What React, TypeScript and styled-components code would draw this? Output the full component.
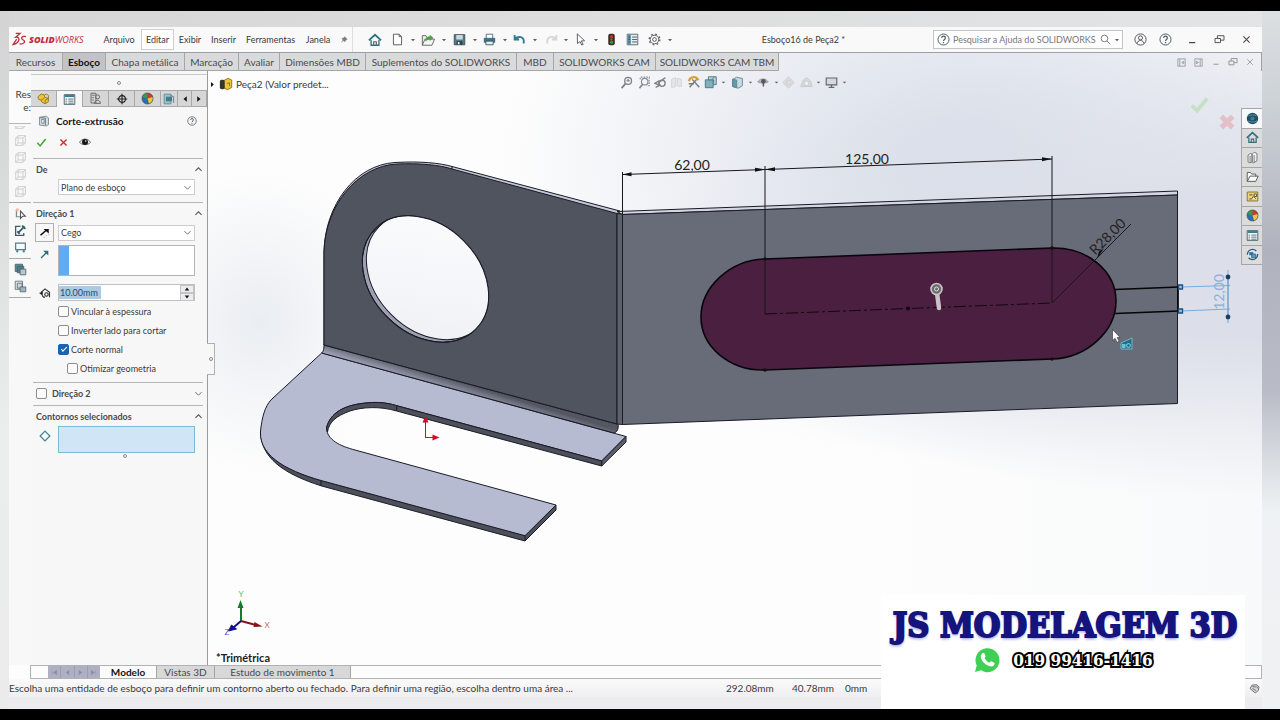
import React from "react";
import styled, { createGlobalStyle } from "styled-components";

const GlobalStyle = createGlobalStyle`
  *, *::before, *::after { box-sizing: border-box; }
  body { margin: 0; background: #000; }
  button, input, select { font: inherit; color: inherit; margin: 0; }
  button { padding: 0; border: 0; background: none; }
`;

const line = "#a9a9ab";
const ui = `Lato, "Open Sans", sans-serif`;

const Page = styled.div`
  min-height: 100vh;
  display: flex;
  flex-direction: column;
  padding: 11px 0;
  background: #000;
  font: 10px/14px ${ui};
  color: #3a3a3c;
`;

const Desk = styled.div`
  position: relative;
  flex: 1;
  display: flex;
  padding: 16px 18px 12px 9px;
  background:
    linear-gradient(180deg, #dcdfe2 0, #cdd2d7 90px, #b0b2bd 240px, #b9bcc6 380px, #eff2f4 500px, #f0f1f3 100%) right / 18px 100% no-repeat,
    linear-gradient(180deg, #d4d4d4 0, #d8d9d9 150px, #eceded 420px, #ebebec 100%) left / 9px 100% no-repeat,
    linear-gradient(180deg, transparent 80%, #ededef 100%),
    linear-gradient(90deg, #d6d6d6 0, #dedede 50%, #e2e4e6 100%);
`;

const Window = styled.div`
  flex: 1;
  min-width: 0;
  display: flex;
  flex-direction: column;
  background:
    radial-gradient(ellipse 130px 150px at 20% 44%, rgba(226, 231, 237, 0.7), rgba(240, 243, 246, 0)),
    radial-gradient(ellipse 620px 230px at 100% 36%, #dcdfe9 30%, rgba(236, 239, 245, 0) 100%),
    radial-gradient(ellipse 460px 300px at 76% 20%, #dbe0ea 10%, rgba(236, 239, 245, 0) 100%),
    linear-gradient(90deg, #fdfdfd 70%, #f8f9fa 100%);
`;

/* ---------- title bar ---------- */

const TitleBar = styled.header`
  display: flex;
  align-items: center;
  height: 26px;
  flex: none;
  padding-right: 2px;
  font-size: 9px;
  background: #f9f9f9;
  border-bottom: 1px solid #a0a0a2;
`;

const Brand = styled.div`
  display: flex;
  align-items: center;
  gap: 2px;
  width: 88px;
  padding-left: 3px;
  color: #c4293c;
  font: italic 9px/12px "Open Sans", sans-serif;
  b { font-weight: 800; }
`;

const MenuButton = styled.button<{ $w: number; $on?: boolean }>`
  width: ${(p) => p.$w}px;
  height: 21px;
  border: 1px solid ${(p) => (p.$on ? "#cfcfcf" : "transparent")};
  background: ${(p) => (p.$on ? "#fff" : "transparent")};
  white-space: nowrap;
`;

const IconButton = styled.button<{ $w?: number; $h?: number }>`
  display: flex;
  align-items: center;
  justify-content: center;
  flex: none;
  width: ${(p) => p.$w ?? 22}px;
  height: ${(p) => p.$h ?? 20}px;
`;

const Pin = styled(IconButton)`
  border-right: 1px solid #dedede;
  height: 25px;
`;

const QuickTools = styled.div`
  display: flex;
  padding-left: 11px;
`;

const DocTitle = styled.h1`
  flex: 1;
  margin: 0;
  font: inherit;
  text-align: center;
  white-space: nowrap;
`;

const Search = styled.label`
  display: flex;
  align-items: center;
  gap: 3px;
  width: 190px;
  height: 19px;
  padding: 0 2px 0 3px;
  margin-right: 5px;
  background: #fff;
  border: 1px solid #c4c4c4;
  svg { flex: none; }
  input {
    flex: 1;
    min-width: 0;
    border: 0;
    padding: 0;
    background: none;
    outline: 0;
  }
  input::placeholder { color: #77777a; opacity: 1; }
`;

/* ---------- command tabs ---------- */

const CommandTabs = styled.nav`
  display: flex;
  height: 18px;
  flex: none;
  border-right: 1px solid #a0a0a2;
`;

const CommandTab = styled.button<{ $w: number; $on?: boolean }>`
  width: ${(p) => p.$w}px;
  flex: none;
  border: solid #a6a6a8;
  border-width: 0 1px 1px 0;
  background: ${(p) => (p.$on ? "#c3c3c5" : "#d9dadb")};
  color: ${(p) => (p.$on ? "#111" : "#4a4a4c")};
  font-weight: ${(p) => (p.$on ? 700 : 400)};
  white-space: nowrap;
`;

const DocControls = styled.div`
  display: flex;
  align-items: center;
  margin-left: auto;
  padding-right: 3px;
`;

/* ---------- work area ---------- */

const Work = styled.div`
  flex: 1;
  display: flex;
  min-height: 0;
`;

const SideStrip = styled.aside`
  width: 22px;
  flex: none;
  display: flex;
  flex-direction: column;
  background: #f8f8f8;
`;

const Clipped = styled.div`
  height: 53px;
  padding-top: 17px;
  overflow: hidden;
  text-align: right;
  line-height: 13px;
  background: #fbfbfb;
  border-bottom: 1px solid #b8b8b8;
`;

const StripGroup = styled.div`
  display: flex;
  flex-direction: column;
  align-items: center;
  padding: 2px 0 2px;
  border-bottom: 1px solid ${line};
`;

const HalfHidden = styled.div`
  display: flex;
  align-items: flex-end;
  height: 6px;
  overflow: hidden;
`;

const Panel = styled.section`
  width: 177px;
  flex: none;
  display: flex;
  flex-direction: column;
  background: #f7f7f8;
  border-right: 1px solid #9c9c9e;
`;

const Grip = styled.div`
  display: flex;
  align-items: center;
  justify-content: center;
  height: 16px;
  margin-top: 3px;
  border-top: 1px solid #c9c9cb;
`;

const Dot = styled.i`
  width: 4px;
  height: 4px;
  border: 1px solid #8a8a8c;
  border-radius: 50%;
`;

const PanelTabs = styled.div`
  display: flex;
  height: 17px;
  border-top: 1px solid ${line};
`;

const PanelTab = styled.button<{ $on?: boolean; $w?: number }>`
  width: ${(p) => p.$w ?? 26}px;
  display: flex;
  align-items: center;
  justify-content: center;
  background: ${(p) => (p.$on ? "#f7f7f8" : "#d6d6d7")};
  border: solid ${line};
  border-width: 0 1px ${(p) => (p.$on ? 0 : 1)}px 0;
`;

const PanelHead = styled.div`
  display: flex;
  align-items: center;
  height: 27px;
  padding: 0 10px 0 7px;
  gap: 6px;
  h2 { flex: 1; margin: 0; font: 700 10px/14px ${ui}; color: #151515; }
`;

const PanelActions = styled.div`
  display: flex;
  height: 24px;
`;

const Group = styled.section<{ $pb?: number }>`
  margin: 0 4px 0 2px;
  padding-bottom: ${(p) => p.$pb ?? 0}px;
  border-top: 1px solid #b5b5b7;
`;

const GroupHead = styled.header`
  display: flex;
  align-items: center;
  height: 20px;
  padding: 0 0 0 3px;
  h3, label { flex: 1; margin: 0; font: 700 9px/13px ${ui}; color: #4a4a4c; }
  input { margin-right: 5px; }
`;

const Row = styled.div<{ $h: number; $top?: boolean }>`
  display: flex;
  align-items: ${(p) => (p.$top ? "flex-start" : "center")};
  height: ${(p) => p.$h}px;
`;

const Lead = styled.span<{ $boxed?: boolean }>`
  width: 19px;
  height: 19px;
  margin: 0 3px 0 2px;
  display: flex;
  align-items: center;
  justify-content: center;
  flex: none;
  border: 1px solid ${(p) => (p.$boxed ? "#b0b0b2" : "transparent")};
`;

const Picker = styled.span`
  display: grid;
  width: 137px;
  height: 16px;
  align-items: center;
  margin-left: 1px;
  > * { grid-area: 1 / 1; }
  select {
    appearance: none;
    width: 100%;
    height: 16px;
    padding: 0 2px;
    border: 1px solid #cdcdcf;
    border-radius: 0;
    background: #fff;
    font-size: 9px;
    line-height: 13px;
  }
  svg { justify-self: end; margin-right: 3px; pointer-events: none; }
`;

const ListRow = styled(Row)`
  padding-top: 3px;
`;

const ListBox = styled.div<{ $active?: boolean; $h: number }>`
  width: 137px;
  height: ${(p) => p.$h}px;
  margin-left: 1px;
  border: 1px solid ${(p) => (p.$active ? "#7dbbd2" : "#b4b4b6")};
  background: ${(p) => (p.$active ? "#d0e5f6" : "linear-gradient(90deg, #5facf4 10px, #fff 10px)")};
`;

const Spin = styled.div`
  display: flex;
  width: 137px;
  height: 17px;
  margin-left: 1px;
  border: 1px solid #c0c0c2;
  background: #fff;
  input {
    flex: 1;
    min-width: 0;
    border: 0;
    padding: 0 1px;
    outline: 0;
    color: #2d4a66;
    font-size: 9px;
    background: linear-gradient(#a9cbe6, #a9cbe6) left center / 42px 13px no-repeat;
  }
`;

const Arrows = styled.div`
  width: 14px;
  display: flex;
  flex-direction: column;
  button { flex: 1; display: flex; align-items: center; justify-content: center; background: #ececee; border: 1px solid #c4c4c6; }
`;

const Tick = styled.input.attrs({ type: "checkbox" })`
  appearance: none;
  position: relative;
  width: 11px;
  height: 11px;
  flex: none;
  border: 1px solid #8d8d90;
  border-radius: 2px;
  background: #fbfbfb;
  &:checked { background: #1b62b0; border-color: #1b62b0; }
  &:checked::after {
    content: "";
    position: absolute;
    left: 2px;
    top: 2px;
    width: 6px;
    height: 3px;
    border: solid #fff;
    border-width: 0 0 1px 1px;
    transform: rotate(-45deg);
  }
`;

const TickRow = styled.label<{ $in?: boolean }>`
  display: flex;
  align-items: center;
  gap: 2px;
  height: 19px;
  padding-left: ${(p) => (p.$in ? 34 : 25)}px;
  font-size: 9px;
  white-space: nowrap;
`;

const Center = styled.div`
  display: flex;
  justify-content: center;
  padding: 1px 0 0 14px;
`;

/* ---------- viewport ---------- */

const Viewport = styled.main`
  flex: 1;
  min-width: 0;
  display: grid;
  grid-template: minmax(0, 1fr) / minmax(0, 1fr);
  > * { grid-area: 1 / 1; }
`;

const Scene = styled.svg`
  width: 100%;
  height: 100%;
  display: block;
`;

const Overlay = styled.div`
  display: flex;
  flex-direction: column;
`;

const HeadsUp = styled.div`
  display: grid;
  grid-template-columns: 1fr auto 1fr;
  align-items: center;
  height: 22px;
  padding-right: 5px;
`;

const TreeRoot = styled.div`
  display: flex;
  align-items: center;
  gap: 3px;
  padding: 4px 0 0 1px;
  white-space: nowrap;
`;

const ViewTools = styled.div`
  display: flex;
`;

const Corner = styled.div`
  display: flex;
  justify-content: flex-end;
  align-items: flex-start;
  padding-top: 15px;
`;

const Confirm = styled.div`
  display: flex;
  padding-right: 4px;
  margin-top: -14px;
  button:last-child { margin-top: 18px; }
`;

const TaskPane = styled.div`
  width: 21px;
  height: 157px;
  display: flex;
  flex-direction: column;
  border: solid #a5a5a7;
  border-width: 1px 0 0 1px;
`;

const TaskButton = styled.button<{ $on?: boolean }>`
  flex: 1;
  display: flex;
  align-items: center;
  justify-content: center;
  background: ${(p) => (p.$on ? "#f8f8f8" : "#dcdcdd")};
  border-bottom: 1px solid #a5a5a7;
`;

const Flap = styled.div`
  align-self: flex-start;
  display: flex;
  align-items: center;
  justify-content: center;
  width: 8px;
  height: 32px;
  margin: 78px 0 0 -1px;
  background: #f7f7f8;
  border: 1px solid #b0b0b2;
  border-left: 0;
`;

/* ---------- bottom ---------- */

const ModelTabs = styled.nav`
  display: flex;
  height: 14px;
  flex: none;
  margin-left: 21px;
  padding-left: 17px;
  border: 1px solid #b2b2b4;
  background: #fcfcfc;
`;

const Player = styled.div`
  display: flex;
  width: 52px;
  gap: 1px;
  background: #9c9cb4;
  button { flex: 1; background: #b0b0c4; display: flex; align-items: center; justify-content: center; }
`;

const ModelTab = styled.button<{ $w: number; $on?: boolean }>`
  width: ${(p) => p.$w}px;
  line-height: 12px;
  background: ${(p) => (p.$on ? "#fcfcfc" : "#d8d8d9")};
  font-weight: ${(p) => (p.$on ? 700 : 400)};
  color: ${(p) => (p.$on ? "#111" : "#4a4a4c")};
  border-right: 1px solid #a6a6a8;
`;

const Status = styled.footer`
  display: flex;
  align-items: center;
  height: 18px;
  flex: none;
  white-space: nowrap;
  background: linear-gradient(#fafafa, #efeff1);
  p { margin: 0 auto 0 0; }
`;

const Readout = styled.span<{ $w: number }>`
  width: ${(p) => p.$w}px;
`;

const Banner = styled.div`
  position: absolute;
  right: 35px;
  bottom: 0;
  width: 364px;
  height: 114px;
  background: #fff;
  display: flex;
  flex-direction: column;
  align-items: center;
  white-space: nowrap;
  strong {
    margin: 9px 0 0 4px;
    font: 700 34px/42px "DejaVu Serif Condensed", "DejaVu Serif", serif;
    color: #14147c;
    -webkit-text-stroke: 2px #14147c;
    text-shadow: 0 2px 3px #8b8bea;
  }
`;

const Phone = styled.div`
  display: flex;
  align-items: center;
  gap: 12px;
  height: 28px;
  span {
    font: 700 17px/22px "DejaVu Serif Condensed", "DejaVu Serif", serif;
    color: #fff;
    -webkit-text-stroke: 4px #000;
    paint-order: stroke fill;
  }
`;

/* ---------- icons ---------- */

const teal = "#2c6e80";
const grey = "#5d5f63";

const art: Record<string, React.ReactNode> = {
  pin: <path d="M9 2l5 5-2 .5-2 3-1 .5L7 9l-4 4 3-5-2-2 1-1 3-1z" fill="#7d7f82" />,
  home: <g fill="none" stroke={teal} strokeWidth="2"><path d="M1 8.500L8 2l7 6.500" /><path d="M3.500 8v6h9V8" strokeWidth="1.500" /><path d="M6.500 14v-4h3v4" strokeWidth="1.300" stroke={grey} /></g>,
  doc: <path d="M3 1.500h7l3 3v10H3zM10 1.500v3h3" fill="#fff" stroke={grey} strokeWidth="1.200" />,
  open: <g stroke={grey}><path d="M1.500 14V3h4l1 2h6v3" fill="#eee" /><path d="M1.500 14l3-7h11l-3 7z" fill="#f4f4f4" /><path d="M5 10c0-5 2-6 5-6V2l4 3.500L10 9V7C8 7 7 8 5 10z" fill="#4ba23e" stroke="none" /></g>,
  save: <g><path d="M1.500 2h13v12.500h-13z" fill="#4d7d8d" stroke="#37474f" /><path d="M4 2.500h8V8H4z" fill="#cfd9dd" /><path d="M4.500 10h7v4.500h-7z" fill="#28424e" /><path d="M6 11h2v3H6z" fill="#fff" /></g>,
  print: <g><path d="M4 1.500h8V7H4z" fill="#fff" stroke="#3e5c6b" /><path d="M1 6h14v6H1z" fill="#3f7388" /><path d="M3.500 10h9v4.500h-9z" fill="#e6eef1" stroke="#2d4a58" /></g>,
  undo: <path d="M2 2.500v5.500h5.500M2 7.500C6 3.500 15 3.500 13 13" fill="none" stroke="#337a94" strokeWidth="2.300" />,
  redo: <path d="M14 2.500v5.500H8.500M14 7.500C10 3.500 1 3.500 3 13" fill="none" stroke="#d6d6d8" strokeWidth="2.200" />,
  cursor: <path d="M4 1l9 8.500-4 .3 2.200 4.200-1.700.8-2-4.300L4.300 13z" fill="#fff" stroke={grey} strokeWidth="1.200" />,
  light: <g><rect x="4" y="1" width="8" height="14" rx="2.500" fill="#3a2b22" /><circle cx="8" cy="4.500" r="2" fill="#c5312b" /><circle cx="8" cy="8" r="1.500" fill="#7d6a34" /><circle cx="8" cy="11.500" r="2" fill="#3f9a41" /></g>,
  list: <g><path d="M1.500 1.500h13v13h-13z" fill="#e7edf0" stroke="#43565f" /><path d="M2 2h4v12.500H2z" fill="#5b93ab" /><path d="M7.500 5h6M7.500 8h6M7.500 11h6M3 5h2M3 8h2M3 11h2" stroke="#36474f" /></g>,
  gear: <g fill="none" stroke={grey} strokeWidth="1.200"><circle cx="8" cy="8" r="5.300" /><circle cx="8" cy="8" r="2.300" /><circle cx="8" cy="8" r="6.600" strokeDasharray="2.200 3" strokeWidth="1.600" /></g>,
  caret: <path d="M2.500 5.500h11L8 11.500z" fill={grey} />,
  help: <g fill="none" stroke="#4f5a60" strokeWidth="1.200"><circle cx="8" cy="8" r="6.800" /><path d="M5.800 6.200c0-3 4.500-3 4.500 0C10.300 8 8 8 8 9.800M8 11.200v1.400" strokeWidth="1.500" /></g>,
  user: <g fill="none" stroke="#55575a" strokeWidth="1.200"><circle cx="8" cy="8" r="6.900" /><circle cx="8" cy="6" r="2.500" /><path d="M3.800 13c.3-5 8.100-5 8.400 0" /></g>,
  magnify: <g fill="none" stroke="#6e7072" strokeWidth="1.300"><circle cx="6.500" cy="6.500" r="4.800" /><path d="M10 10l5 5" /></g>,
  min: <path d="M3 12.500h9" stroke="#444" strokeWidth="1.800" />,
  restore: <path d="M1.500 6.500h8v6h-8zM5 6V2.500h9.500V9H10" fill="none" stroke="#444" strokeWidth="1.300" />,
  close: <path d="M3.500 3.500l9 9M12.500 3.500l-9 9" stroke="#444" strokeWidth="1.500" />,
  minor: <path d="M3 12.500h10" stroke="#8b9096" strokeWidth="1.800" />,
  restoreor: <path d="M1.500 6.500h8v6h-8zM5 6V2.500h9.500V9H10" fill="none" stroke="#8b9096" strokeWidth="1.500" />,
  closeor: <path d="M2.500 2.500l11 11M13.500 2.500l-11 11" stroke="#8b9096" strokeWidth="1.600" />,
  dockl: <path d="M1.500 1.500h13v13h-13zM5 2v12M12 6L8.500 8l3.500 2z" fill="none" stroke="#858a90" strokeWidth="1.300" />,
  dockr: <path d="M1.500 1.500h13v13h-13zM11 2v12M4 6l4 2-4 2z" fill="none" stroke="#858a90" strokeWidth="1.300" />,
  cube: <path d="M2 5h9v9H2zM5 2h9v9M5 2L2 5M14 2l-3 3M14 11l-3 3M5 2v9h9M5 11l-3 3" fill="none" stroke="#c9cbcd" strokeWidth="1.100" />,
  sketch: <g fill="none"><path d="M3 3v9h5" stroke="#7c8a90" strokeWidth="1.500" /><circle cx="4" cy="3.500" r="2" fill="#f3b6a3" /><path d="M8 5v9l2.500-2.500H14z" stroke="#555" strokeWidth="1.300" fill="#fff" /></g>,
  edit: <g fill="none" stroke="#35606c" strokeWidth="1.600"><path d="M8 3H2v11h10v-3" /><path d="M5 11L13 3M10 2l4 4M4 9l3 3" strokeWidth="2.200" /></g>,
  flow: <g fill="none" stroke="#4f8390" strokeWidth="1.500"><path d="M2 2.500h12v8H2z" /><path d="M4 10v4M12 10v4M2.500 12.500h3M10.500 12.500h3" /></g>,
  stack: <g stroke="#48606a"><path d="M1.500 1.500h9v9h-9z" fill="#5d8e9a" /><path d="M4 4h8v8H4z" fill="#4d7c88" /><path d="M7.500 7.500h7v7h-7z" fill="#b9c7cc" /></g>,
  stack2: <g stroke="#57686f"><path d="M1.500 1.500h9v10h-9z" fill="#e8eced" /><path d="M4 4h6v6H4z" fill="#cfd8da" /><path d="M7.500 8.500h7v6h-7z" fill="#9fb4ba" /></g>,
  part: <g fill="#ecc53a" stroke="#8d6a12"><path d="M1 6l4-3.500 4 1 .5 3L14 8v4l-4 2.500-4-2L5 10 2 9z" /><path d="M9.500 3.500l2.500-1 2 2V8M5 10l4-2.500M10 14v-4l4-2" fill="none" /></g>,
  part2: <g><path d="M5.500 4l5-2.500 4 2V12l-5 2.500-4-2z" fill="#ecc53a" stroke="#8d6a12" /><rect x="1" y="3" width="5.500" height="11" rx="2" fill="#3a352a" /><path d="M9 7.500l3-1v4" stroke="#8d6a12" fill="none" /></g>,
  config: <g fill="none" stroke="#66686c" strokeWidth="1.200"><path d="M2.500 1.500h6v12h-6zM4 4h3M4 7h2" /><circle cx="10.500" cy="6" r="2.500" /><path d="M7 14c0-5 7-5 7 0zM4 10h2" /></g>,
  target: <g fill="none" stroke="#222" strokeWidth="1.500"><circle cx="8" cy="8" r="4.500" /><path d="M8 1v14M1 8h14" /></g>,
  ball: <g><circle cx="8" cy="8" r="6.800" fill="#2b6db5" /><path d="M8 8L1.500 6A6.800 6.800 0 0 1 8 1.200z" fill="#3f9a41" /><path d="M8 8V1.200A6.800 6.800 0 0 1 14.500 6z" fill="#d33a2c" /><path d="M8 8l6.500-2A6.800 6.800 0 0 1 10 14.500z" fill="#f0c63a" /><circle cx="8" cy="8" r="6.800" fill="none" stroke="#4d4d4d" strokeWidth=".8" /></g>,
  cam: <g><path d="M1.500 1.500h9v13h-9z" fill="#9cc1c8" stroke="#4f8390" /><path d="M4 5h8v6H4z" fill="#3f7e8e" /><path d="M10 3l4 2v8" stroke="#77888c" fill="none" strokeWidth="1.500" /></g>,
  left: <path d="M11.500 2.500v11L5 8z" fill="#111" />,
  right: <path d="M4.500 2.500v11L11 8z" fill="#111" />,
  extrude: <g stroke="#6c7a80"><path d="M2 3l9-1.500L14 4v9l-3 1.500-9-1z" fill="#d3dadd" /><path d="M2 3l8 1v10" fill="#aebbc0" /><path d="M5 6h3v5H5z" fill="#fff" /></g>,
  ok: <path d="M2 8.500l4 4.500 8-10" fill="none" stroke="#3fa535" strokeWidth="2.200" />,
  no: <path d="M2.500 2.500l11 11M13.500 2.500l-11 11" stroke="#c93030" strokeWidth="2.500" />,
  eye: <g><path d="M.5 8.500C4 2.500 12 2.500 15.500 8.500 12 12.500 4 12.500.5 8.500z" fill="#e8e8e8" stroke="#555" /><circle cx="8" cy="8" r="4" fill="#16181c" /><circle cx="9" cy="6.500" r="1" fill="#fff" /></g>,
  up: <path d="M2.500 10.500L8 5l5.500 5.500" fill="none" stroke="#555" strokeWidth="1.800" />,
  down: <path d="M2.500 5.500L8 11l5.500-5.500" fill="none" stroke="#666" strokeWidth="1.600" />,
  flip: <g><path d="M2 11L10 4" stroke="#111" strokeWidth="2.200" /><path d="M6 2.500h7v6z" fill="#111" /><path d="M6 14l8-5" stroke="#c8c8ca" strokeWidth="1.600" strokeDasharray="2 1.500" /></g>,
  dir: <g><path d="M3 13L11 5" stroke={teal} strokeWidth="2" /><path d="M6 2.500h7.500v7z" fill={teal} /></g>,
  depth: <g fill="none" stroke="#333" strokeWidth="1.500"><path d="M3 7l5-4.500 6 4.500v6.500" /><path d="M0 8l5-2v5.500z" fill="#222" stroke="none" /><path d="M4 11l2 2.500h2" /><circle cx="10" cy="10" r="2.300" /></g>,
  diamond: <path d="M8 1.500L14.500 8 8 14.500 1.500 8z" fill="none" stroke="#3f8290" strokeWidth="1.600" />,
  triup: <path d="M2 12h12L8 4z" fill="#111" />,
  tridown: <path d="M2 4h12l-6 8z" fill="#111" />,
  zoomfit: <g fill="none" stroke="#808285" strokeWidth="1.600"><circle cx="10" cy="6" r="4.200" /><path d="M7 9l-5 6" strokeWidth="2.200" /><path d="M10 3.500v3M8 6h4" /></g>,
  zoomarea: <g fill="none" stroke="#8b8d96" strokeWidth="1.500"><circle cx="9.500" cy="7" r="4" /><path d="M7 10l-4 5" strokeWidth="2.200" /><path d="M4 4V1.500h11V12h-3" strokeDasharray="2 1.300" /></g>,
  prev: <g fill="none" stroke="#808285" strokeWidth="1.700"><circle cx="10" cy="9" r="3.700" /><path d="M14 2L7 7M8 11l-6 3M1 9l5-3v5z" /></g>,
  section: <g fill="#e4e6e7" stroke="#cdcfd1"><path d="M2 4l5-2v11l-5 1zM9 3l5 1v9l-5-1z" /></g>,
  annot: <g fill="none"><path d="M2 7c2-6 9-6 11-1" stroke="#d7a13e" strokeWidth="2.500" /><path d="M3 14l8-9M6 5l8 9M2 10h6" stroke="#7b7d80" strokeWidth="1.700" /></g>,
  orient: <g stroke="#49717f"><path d="M1.500 5.500h9v9h-9z" fill="#7fb0c0" /><path d="M5 2h9v9h-3V5.500H5z" fill="#b9d2da" /><path d="M9 5l3-3" /></g>,
  display: <g stroke="#5b7f8b"><path d="M2 4l5-2.500L14 3v9l-5 3-7-2z" fill="#c3dbe2" /><path d="M2 4l5 1v9.500l-5-1.500z" fill="#5f9aad" /></g>,
  hide: <g><path d="M1 8C4 2.500 12 2.500 15 8c-3 2-11 2-14 0z" fill="#b5b7ba" stroke="#8a8c90" /><circle cx="8.500" cy="7" r="3" fill="#55585d" /><path d="M8.500 7v7" stroke="#55585d" strokeWidth="2" /></g>,
  appear: <g fill="#dcdde0" stroke="#cbccd0"><path d="M8 1l7 7-7 7-7-7z" /><circle cx="8" cy="8" r="3" /></g>,
  scene: <g fill="#d8d9dd" stroke="#c6c8cc"><path d="M1 13l3-8 4-3 5 4 2 7z" /><circle cx="8" cy="9" r="3" fill="#eee" /></g>,
  monitor: <g fill="none" stroke="#62656b" strokeWidth="1.400"><path d="M1.500 2.500h13v8.500h-13z" fill="#d5d9df" /><path d="M8 11v3M4.500 14h7" /></g>,
  bigok: <path d="M1.500 9l4.500 4L14.500 3" fill="none" stroke="#c6e0c2" strokeWidth="3.200" />,
  bigno: <path d="M3 3l10 10M13 3L3 13" stroke="#e3bfca" strokeWidth="4.500" />,
  globe: <g><circle cx="8" cy="8" r="7" fill="#1f4e63" /><path d="M3 5c3-2 7-2 10 0M2.500 11c4 2 7 2 11 0" stroke="#6ba3b8" fill="none" /><circle cx="8" cy="8" r="2.500" fill="#3a7f99" /></g>,
  lib: <g fill="#f1f1f1" stroke="#64666a"><path d="M2.500 5l3-2 2 1v9.500l-3 1-2-1zM7.500 4l2.500-2.500 3.500 1.500V12l-4 2.500-2-1zM5 6v8M10 5v9" /></g>,
  folder: <path d="M1.500 14V3h4l1.500 2h5v3M1.500 14L5 7.500h10L12 14z" fill="#fafafa" stroke="#595b5f" strokeWidth="1.200" />,
  palette: <g><path d="M1.500 2.500h13v11h-13z" fill="#efd36c" stroke="#6f6331" /><path d="M4 6h4M10 5h3v3h-3zM4 11h3l2-3 3 3" stroke="#5a512c" fill="#fff" strokeWidth="1.200" /></g>,
  props: <g><path d="M1.500 2h13v12h-13z" fill="#f7f9fa" stroke="#37505a" /><path d="M2 2.500h12V5H2z" fill="#3b7c90" /><path d="M3 7.500h2M3 10h2M3 12.500h2M6.500 7.500h6.500M6.500 10h6.500M6.500 12.500h6.500" stroke="#37606c" /></g>,
  forum: <g><circle cx="8" cy="8" r="6.300" fill="#dbe8ef" stroke="#2d5d7b" strokeWidth="1.600" strokeDasharray="15 4" /><path d="M4 5h5v4H4z" fill="#36749a" /><path d="M7 7.500h5V12H7z" fill="#5b9cc0" stroke="#2d5d7b" /></g>,
  first: <path d="M4 4v8M12 4v8L6 8z" stroke="#8d8da6" fill="#8d8da6" />,
  last: <path d="M12 4v8M4 4v8l6-4z" stroke="#8d8da6" fill="#8d8da6" />,
  back: <path d="M11 3v10L5 8z" fill="#8d8da6" />,
  fwd: <path d="M5 3v10l6-5z" fill="#8d8da6" />,
  tag: <g fill="#d6d6d8" stroke="#66686c" strokeWidth="1.300"><path d="M1.500 8l3-5 7-.5 3 3.500-1 5-4.500 3.500z" /><path d="M5 5l5 1M5 8l5 3M11 5l2 3" /></g>,
};

function Icon({ name, size = 12 }: { name: string; size?: number }) {
  return <svg width={size} height={size} viewBox="0 0 16 16" aria-hidden="true">{art[name]}</svg>;
}

function Tool({ name, label, w, h, size }: { name: string; label: string; w?: number; h?: number; size?: number }) {
  return <IconButton aria-label={label} $w={w} $h={h}><Icon name={name} size={size} /></IconButton>;
}

function ToolSet({ items }: { items: [string, string, number, number][] }) {
  return <>{items.map(([n, l, w, s]) => <Tool key={l} name={n} label={l} w={w} size={s} />)}</>;
}

const quick: [string, string, number, number][] = [
  ["home", "Início", 22, 14], ["doc", "Novo", 22, 13], ["caret", "Opções de novo", 9, 6],
  ["open", "Abrir", 22, 14], ["caret", "Opções de abrir", 9, 6],
  ["save", "Salvar", 22, 13], ["caret", "Opções de salvar", 9, 6],
  ["print", "Imprimir", 21, 13], ["caret", "Opções de imprimir", 9, 6],
  ["undo", "Desfazer", 20, 13], ["caret", "Opções de desfazer", 11, 6],
  ["redo", "Refazer", 22, 13], ["caret", "Opções de refazer", 8, 6],
  ["cursor", "Selecionar", 20, 13], ["caret", "Opções de seleção", 11, 6],
  ["light", "Reconstruir", 21, 13], ["list", "Propriedades do arquivo", 21, 13],
  ["gear", "Opções", 22, 13], ["caret", "Mais opções", 9, 6],
];

const views: [string, string, number, number][] = [
  ["zoomfit", "Zoom para ajustar", 17, 13], ["zoomarea", "Zoom de área", 17, 13],
  ["prev", "Vista anterior", 17, 13], ["section", "Vista de seção", 16, 13],
  ["annot", "Anotações dinâmicas", 18, 14], ["orient", "Orientação de vista", 17, 14], ["caret", "Mais orientações", 8, 5],
  ["display", "Estilo de exibição", 19, 13], ["caret", "Mais estilos", 7, 5],
  ["hide", "Ocultar itens", 19, 12], ["caret", "Mais itens", 7, 5],
  ["appear", "Editar aparência", 18, 13], ["scene", "Aplicar cena", 17, 13], ["caret", "Mais cenas", 8, 5],
  ["monitor", "Configurações de vista", 18, 13], ["caret", "Mais configurações", 7, 5],
];

const commandTabs: [string, number][] = [
  ["Recursos", 54], ["Esboço", 43], ["Chapa metálica", 79], ["Marcação", 54], ["Avaliar", 41],
  ["Dimensões MBD", 86], ["Suplementos do SOLIDWORKS", 151], ["MBD", 37],
  ["SOLIDWORKS CAM", 102], ["SOLIDWORKS CAM TBM", 123],
];

const menus: [string, number][] = [["Arquivo", 44], ["Editar", 33], ["Exibir", 32], ["Inserir", 35], ["Ferramentas", 59], ["Janela", 36]];

function Model() {
  const edge = "#191b26";
  return (
    <Scene viewBox="208 71 1054 594" role="img" aria-label="Peça2">
      <defs>
        <linearGradient id="bend" x1="470" y1="385" x2="466" y2="398" gradientUnits="userSpaceOnUse">
          <stop offset="0" stopColor="#545762" /><stop offset="1" stopColor="#a9acc2" />
        </linearGradient>
        <linearGradient id="inside" x1="0" y1="0" x2="1" y2="1">
          <stop offset="0" stopColor="#fdfdfe" /><stop offset="1" stopColor="#edf0f4" />
        </linearGradient>
        <clipPath id="hole"><ellipse cx="425.500" cy="279" rx="71" ry="54" transform="rotate(45 425.500 279)" /></clipPath>
      </defs>

      <g stroke={edge} strokeWidth="1" strokeLinejoin="round">
        <path d="M260.500 430C260 458 284 474 321.700 486L525 541L556 510V505L525 535.500L321.700 480.700C284 470 262 454 260.500 430z" fill="#4d505b" />
        <path d="M321.700 353L626 436.500L601.700 461L396.700 405.700C385 402 374 402 366 403C344 405 330 413 326.500 428C327 440 340 446 355 450L556 505L525 535.700L321.700 480.700C284 470 256 454 261 427C263 412 267 403 273 398z" fill="#b7bbd1" />
        <path d="M601.700 461L626 436.500V442L601.700 466z" fill="#5b5e6c" />
        <path d="M326.500 428C330 413 344 405 366 403C374 402 385 402 396.700 405.700L601.700 461V466L396.700 411C380 406 362 407 350 411C336 416 329 422 327.500 432z" fill="#4d505b" />
        <path d="M321 480v6M396.700 405.700v5M525 535.500v5.500" />
        <path d="M324 344.500L618 423.500C619 429 617 432 614 433L321.700 353C324 351 324 348 324 344.500z" fill="url(#bend)" />
        <path d="M324 345V252C325 205 355 165 395 162.500C420 161 440 163 452 166.500L620 211L617 424z" fill="#c4c7d6" />
        <path d="M324 345V252C325 206 357 166 397 164C420 163 440 165 452 169L617 213.500V424z" fill="#50545e" />
        <path d="M452 166v3" />
        <path d="M617 213.500L622.500 214V424.500L617 424z" fill="#5d616c" />
        <path d="M617 211.500L1177.500 191V195L622.500 214.500z" fill="#d3d6e2" />
        <path d="M622.500 214.500L1177.500 195V403.500L622.500 424.500z" fill="#686c78" />
        <ellipse cx="425.500" cy="279" rx="71" ry="54" transform="rotate(45 425.500 279)" fill="#9ea1b2" />
        <g clipPath="url(#hole)">
          <ellipse cx="429.500" cy="276.500" rx="71" ry="54" transform="rotate(45 429.500 276.500)" fill="url(#inside)" />
        </g>
        <ellipse cx="425.500" cy="279" rx="71" ry="54" transform="rotate(45 425.500 279)" fill="none" />
      </g>

      <path d="M765 259C730 260 701 287 701 317C701 347 730 371 765 370L1052 359C1087 358 1116 331 1116 301C1116 271 1087 247 1052 248z" fill="#4b1f3f" stroke="#08060c" strokeWidth="1.600" />
      <path d="M765 314L1052 303" stroke="#12060f" strokeDasharray="12 3 3 3" />
      <circle cx="908" cy="308.500" r="2" fill="#12060f" />
      <path d="M1115 289.500L1179 287M1115 313.500L1179 311M1178 287V311" stroke="#050508" strokeWidth="1.700" />

      <g stroke="#17171c" fill="none" strokeWidth="1">
        <path d="M622.500 172V214M765 166V314M1052 156V303M622.500 174.500L765 169.500L1052 159M1052 303L1131 224" />
      </g>
      <g fill="#111">
        <path d="M622.500 174.500l9-2.300v4zM765 169.500l-10-1.700v4zM765 169.500l10-2.300v4zM1052 159l-10-1.700v4zM1097 258.500l7-10-5 3z" />
        <circle cx="765" cy="259" r="1.800" /><circle cx="765" cy="370" r="1.800" /><circle cx="1052" cy="248" r="1.800" /><circle cx="1052" cy="359" r="1.800" />
      </g>
      <g fontFamily="Lato, sans-serif" fontSize="14" fill="#222" textAnchor="middle">
        <text x="692" y="170">62,00</text>
        <text x="867" y="164">125,00</text>
        <text transform="translate(1111 240) rotate(-45)">R28,00</text>
        <text transform="translate(1224 292) rotate(-90)" fill="#82b3df">12,00</text>
      </g>

      <g stroke="#75addf" strokeWidth="1" fill="none">
        <path d="M1181 287L1230 285.500M1181 311L1230 309M1228 270V323" />
        <path d="M1228 278V317" stroke="#6f9cc6" />
      </g>
      <g fill="#1c3e60"><circle cx="1228" cy="277" r="2.400" /><circle cx="1228" cy="317" r="2.400" /></g>
      <path d="M1178.500 285h4v4h-4zM1178.500 309h4v4h-4z" fill="#8fc1e8" stroke="#1d4f80" strokeWidth="1.300" />

      <path d="M937 293L939 308" stroke="#cbbfc8" strokeWidth="4.500" strokeLinecap="round" />
      <circle cx="936.500" cy="289" r="5.500" fill="#6d6a6c" stroke="#c9c3c6" strokeWidth="1.600" />
      <circle cx="936.500" cy="289" r="2" fill="none" stroke="#ddd" />

      <path d="M1112.500 329.500v11l2.600-2.200 2 4 2-1-2-3.800h3z" fill="#fff" stroke="#333" strokeWidth=".6" />
      <path d="M1121 343l11-5v11h-11z" fill="#1f6d86" stroke="#7fc8db" strokeWidth=".8" />
      <path d="M1122 344h3.500v4h-3.500z" fill="#6fc0d6" /><circle cx="1128.500" cy="345.500" r="1.900" fill="none" stroke="#8ed6e6" />

      <g stroke="#c8102e" fill="#c8102e"><path d="M425.500 438V419M425 437.500h11" fill="none" /><path d="M425.500 415.500l-3 7h6zM439.500 437.500l-7-3v6z" stroke="none" /></g>

      <path d="M241 621V606" stroke="#187a2a" strokeWidth="2" /><path d="M240.500 600l-3 8h6z" fill="#187a2a" />
      <path d="M241 621l15 4" stroke="#8b1018" strokeWidth="2" /><path d="M262.500 626.500l-8-4.500-1 5z" fill="#8b1018" />
      <path d="M241 621l-7 6" stroke="#10108e" strokeWidth="2" /><path d="M228.500 631l3-6 5 4z" fill="#10108e" stroke="#10108e" />
      <g fontFamily="Lato, sans-serif" fontSize="8" textAnchor="middle">
        <text x="241" y="597" fill="#5fb366">Y</text><text x="267" y="628" fill="#c46a72">X</text><text x="227" y="635" fill="#4a4acb">Z</text>
      </g>
      <text x="216" y="662" fontFamily="Lato, sans-serif" fontSize="11" fontWeight="700" fill="#1d1d1f">*Trimétrica</text>
    </Scene>
  );
}

export default function App() {
  return (
    <Page>
      <GlobalStyle />
      <Desk>
        <Window>
          <TitleBar>
            <Brand>
              <svg width="15" height="15" viewBox="0 0 16 16" fill="none" stroke="#c4293c" strokeWidth="1.400" aria-hidden="true">
                <path d="M4 1.500h4.500L4 5.500c5-1 5 6-3 8l4-6" /><path d="M15 5c-5-1-6 2-3 3.500S13 13 8 13" />
              </svg>
              <span><b>SOLID</b>WORKS</span>
            </Brand>
            {menus.map(([m, w]) => <MenuButton key={m} $w={w} $on={m === "Editar"}>{m}</MenuButton>)}
            <Pin $w={17} aria-label="Fixar menu"><Icon name="pin" size={10} /></Pin>
            <QuickTools><ToolSet items={quick} /></QuickTools>
            <DocTitle>Esboço16 de Peça2 *</DocTitle>
            <Search>
              <Icon name="help" size={13} />
              <input type="text" placeholder="Pesquisar a Ajuda do SOLIDWORKS" aria-label="Pesquisar a Ajuda do SOLIDWORKS" />
              <Icon name="magnify" size={11} />
              <Icon name="caret" size={6} />
            </Search>
            <Tool name="user" label="Conta" w={24} size={13} />
            <Tool name="help" label="Ajuda" w={27} size={13} />
            <Tool name="min" label="Minimizar" w={27} size={11} />
            <Tool name="restore" label="Restaurar" w={27} size={11} />
            <Tool name="close" label="Fechar" w={27} size={11} />
          </TitleBar>

          <CommandTabs>
            {commandTabs.map(([t, w]) => <CommandTab key={t} $w={w} $on={t === "Esboço"}>{t}</CommandTab>)}
            <DocControls>
              <Tool name="dockl" label="Encaixar à esquerda" w={17} size={9} />
              <Tool name="dockr" label="Encaixar à direita" w={17} size={9} />
              <Tool name="minor" label="Minimizar documento" w={17} size={8} />
              <Tool name="restoreor" label="Restaurar documento" w={17} size={10} />
              <Tool name="closeor" label="Fechar documento" w={17} size={8} />
            </DocControls>
          </CommandTabs>

          <Work>
            <SideStrip>
              <Clipped>Res<br />e:</Clipped>
              <StripGroup>
                <HalfHidden><Tool name="cube" label="Vista 0" h={17} size={13} /></HalfHidden>
                {[1, 2, 3, 4].map((n) => <Tool key={n} name="cube" label={`Vista ${n}`} h={17} size={13} />)}
              </StripGroup>
              <StripGroup>
                <Tool name="sketch" label="Esboço" h={17} size={13} />
                <Tool name="edit" label="Editar esboço" h={17} size={13} />
                <Tool name="flow" label="Relações" h={17} size={13} />
              </StripGroup>
              <StripGroup>
                <Tool name="stack" label="Copiar" h={17} size={13} />
                <Tool name="stack2" label="Mover" h={17} size={13} />
              </StripGroup>
            </SideStrip>

            <Panel>
              <Grip><Dot /></Grip>
              <PanelTabs>
                <PanelTab aria-label="Árvore"><Icon name="part" size={13} /></PanelTab>
                <PanelTab aria-label="Propriedades" $on><Icon name="props" size={13} /></PanelTab>
                <PanelTab aria-label="Configurações"><Icon name="config" size={13} /></PanelTab>
                <PanelTab aria-label="DimXpert"><Icon name="target" size={12} /></PanelTab>
                <PanelTab aria-label="Aparências"><Icon name="ball" size={13} /></PanelTab>
                <PanelTab aria-label="CAM" $w={17}><Icon name="cam" size={12} /></PanelTab>
                <PanelTab aria-label="Anterior" $w={14}><Icon name="left" size={8} /></PanelTab>
                <PanelTab aria-label="Próximo" $w={15}><Icon name="right" size={8} /></PanelTab>
              </PanelTabs>

              <PanelHead>
                <Icon name="extrude" size={12} />
                <h2>Corte-extrusão</h2>
                <Icon name="help" size={10} />
              </PanelHead>
              <PanelActions>
                <Tool name="ok" label="OK" w={21} h={16} size={11} />
                <Tool name="no" label="Cancelar" w={22} h={16} size={9} />
                <Tool name="eye" label="Visualizar" w={22} h={16} size={12} />
              </PanelActions>

              <Group $pb={7}>
                <GroupHead><h3>De</h3><Icon name="up" size={9} /></GroupHead>
                <Row $h={16}>
                  <Lead />
                  <Picker>
                    <select aria-label="De"><option>Plano de esboço</option></select>
                    <Icon name="down" size={9} />
                  </Picker>
                </Row>
              </Group>

              <Group $pb={4}>
                <GroupHead><h3>Direção 1</h3><Icon name="up" size={9} /></GroupHead>
                <Row $h={19}>
                  <Lead $boxed><Icon name="flip" size={12} /></Lead>
                  <Picker>
                    <select aria-label="Condição final"><option>Cego</option></select>
                    <Icon name="down" size={9} />
                  </Picker>
                </Row>
                <ListRow $h={41} $top>
                  <Lead><Icon name="dir" size={11} /></Lead>
                  <ListBox $h={31} />
                </ListRow>
                <Row $h={19}>
                  <Lead><Icon name="depth" size={12} /></Lead>
                  <Spin>
                    <input defaultValue="10.00mm" aria-label="Profundidade" />
                    <Arrows>
                      <button aria-label="Aumentar"><Icon name="triup" size={6} /></button>
                      <button aria-label="Diminuir"><Icon name="tridown" size={6} /></button>
                    </Arrows>
                  </Spin>
                </Row>
                <TickRow><Tick />Vincular à espessura</TickRow>
                <TickRow><Tick />Inverter lado para cortar</TickRow>
                <TickRow><Tick defaultChecked />Corte normal</TickRow>
                <TickRow $in><Tick />Otimizar geometria</TickRow>
              </Group>

              <Group $pb={2}>
                <GroupHead><Tick id="dir2" /><label htmlFor="dir2">Direção 2</label><Icon name="down" size={9} /></GroupHead>
              </Group>

              <Group>
                <GroupHead><h3>Contornos selecionados</h3><Icon name="up" size={9} /></GroupHead>
                <Row $h={27} $top>
                  <Lead><Icon name="diamond" size={12} /></Lead>
                  <ListBox $h={27} $active />
                </Row>
                <Center><Dot /></Center>
              </Group>
            </Panel>

            <Viewport>
              <Model />
              <Overlay>
                <HeadsUp>
                  <TreeRoot><Icon name="right" size={7} /><Icon name="part2" size={14} />Peça2 (Valor predet...</TreeRoot>
                  <ViewTools><ToolSet items={views} /></ViewTools>
                </HeadsUp>
                <Corner>
                  <Confirm>
                    <Tool name="bigok" label="Aceitar esboço" w={36} size={19} />
                    <Tool name="bigno" label="Cancelar esboço" w={20} size={18} />
                  </Confirm>
                  <TaskPane>
                    {["globe", "home", "lib", "folder", "palette", "ball", "props", "forum"].map((n) => (
                      <TaskButton key={n} aria-label={n} $on={n === "globe"}><Icon name={n} size={13} /></TaskButton>
                    ))}
                  </TaskPane>
                </Corner>
                <Flap><Dot /></Flap>
              </Overlay>
            </Viewport>
          </Work>

          <ModelTabs>
            <Player>
              {["first", "back", "fwd", "last"].map((n) => <button key={n} aria-label={n}><Icon name={n} size={9} /></button>)}
            </Player>
            <ModelTab $w={57} $on>Modelo</ModelTab>
            <ModelTab $w={58}>Vistas 3D</ModelTab>
            <ModelTab $w={136}>Estudo de movimento 1</ModelTab>
          </ModelTabs>
          <Status>
            <p>Escolha uma entidade de esboço para definir um contorno aberto ou fechado. Para definir uma região, escolha dentro uma área ...</p>
            <Readout $w={66}>292.08mm</Readout>
            <Readout $w={53}>40.78mm</Readout>
            <Readout $w={402}>0mm</Readout>
            <Tool name="tag" label="Marcas" w={15} h={16} size={11} />
          </Status>
        </Window>

        <Banner>
          <strong>JS MODELAGEM 3D</strong>
          <Phone>
            <svg width="28" height="28" viewBox="0 0 28 28" aria-hidden="true">
              <path d="M2 26l1.700-6.500A12 12 0 1 1 8 24.300z" fill="#3fcf54" />
              <path d="M9 7.500c1-1 2-.8 2.500.3l1 2.200c.2.600-.2 1.200-1 2 1.300 2.400 2.900 3.800 5 4.700.9-1 1.400-1.700 2-1.400l2.700 1.400c.9.500.3 2.300-.7 3.100-4.500 3-13.800-5-12.700-10z" fill="#fff" />
            </svg>
            <span>019 99416-1416</span>
          </Phone>
        </Banner>
      </Desk>
    </Page>
  );
}
